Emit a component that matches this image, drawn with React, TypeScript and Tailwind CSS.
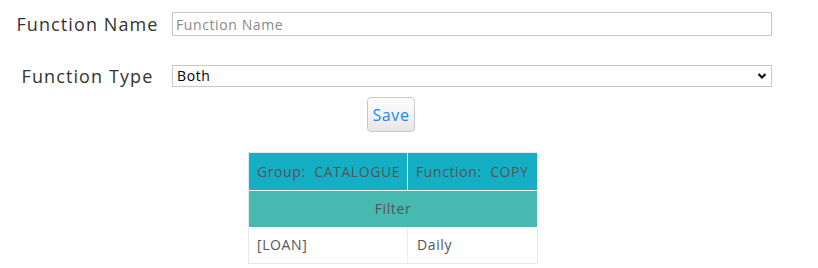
import React from "react";

export default function App() {
  const font = { fontFamily: '"Open Sans", "DejaVu Sans", sans-serif' };
  return (
    <div className="w-[818px] h-[268px] bg-white text-[#333] tracking-[0.6px]" style={font}>
      <div className="flex items-center pt-[12px] h-[24px] box-content">
        <label className="w-[172px] text-center text-[18px] leading-[24px] text-[#333] tracking-[1.1px] pl-[3px]">Function Name</label>
        <input
          placeholder="Function Name"
          className="w-[600px] h-[24px] border border-[#c8c8c8] px-[3px] text-[14px] tracking-[0.6px] placeholder-[#8a8a8a] outline-none"
          style={font}
        />
      </div>
      <div className="flex items-center mt-[29px] h-[22px]">
        <label className="w-[172px] text-center text-[18px] leading-[22px] text-[#333] tracking-[1.1px] pl-[3px]">Function Type</label>
        <div className="relative w-[600px] h-[22px] border border-[#c8c8c8] flex items-center">
          <span className="pl-[4px] text-[14px] leading-[20px] text-black">Both</span>
          <svg className="absolute right-[4px] top-[6px]" width="10" height="8" viewBox="0 0 10 8">
            <path d="M1.5 2 L5 5.5 L8.5 2" stroke="#111" strokeWidth="2.2" fill="none" />
          </svg>
        </div>
      </div>
      <div className="flex mt-[10px] pl-[367px]">
        <button
          className="w-[48px] h-[35px] rounded-[4px] border border-[#c9c9c9] bg-gradient-to-b from-white to-[#e6e6e6] text-[16px] leading-[20px] tracking-[0.6px] text-[#1e88e5]"
          style={font}
        >
          Save
        </button>
      </div>
      <div className="pl-[248px] mt-[20px]">
        <div className="w-[290px] border border-[#e8e8e8] text-[14px] text-[#555] leading-[20px]">
          <div className="flex h-[37px] bg-[#14aec5]">
            <div className="w-[159px] flex items-center pl-[8px] border-r border-white">Group:&nbsp; CATALOGUE</div>
            <div className="flex-1 flex items-center pl-[8px]">Function:&nbsp; COPY</div>
          </div>
          <div className="flex h-[37px] items-center justify-center bg-[#48b9b0] border-t border-white">Filter</div>
          <div className="flex h-[36px]">
            <div className="w-[159px] flex items-center pl-[8px] border-r border-[#ececec]">[LOAN]</div>
            <div className="flex-1 flex items-center pl-[9px]">Daily</div>
          </div>
        </div>
      </div>
    </div>
  );
}
